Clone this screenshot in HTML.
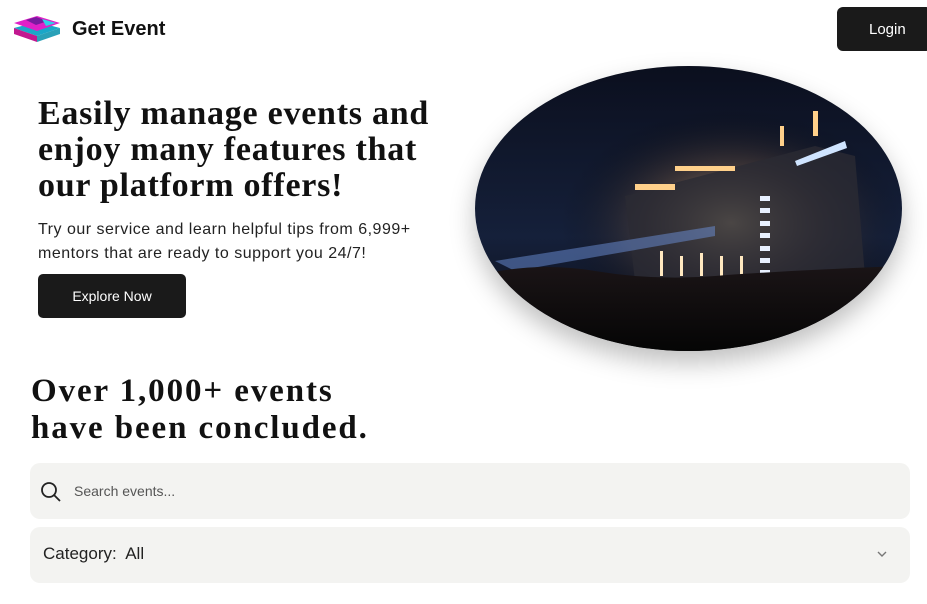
<!DOCTYPE html>
<html><head><meta charset="utf-8"><style>
*{margin:0;padding:0;box-sizing:border-box}
body{width:927px;height:604px;background:#fff;font-family:"Liberation Sans",sans-serif;color:#111;position:relative;overflow:hidden}
.logo{position:absolute;left:12px;top:14px}
.brand{position:absolute;left:72px;top:18px;font-size:20px;font-weight:bold;color:#111}
.login{position:absolute;left:837px;top:7px;width:95px;height:44px;background:#1a1a1a;color:#fff;border-radius:6px;font-size:15px;line-height:46px;padding-left:32px}
h1{position:absolute;left:38px;top:96px;font-family:"Liberation Serif",serif;font-weight:bold;font-size:34px;line-height:36px;letter-spacing:0.75px}
.sub{position:absolute;left:38px;top:218px;font-size:16px;line-height:24px;color:#222;letter-spacing:0.5px}
.explore{position:absolute;left:38px;top:274px;width:148px;height:44px;background:#1a1a1a;color:#fff;border-radius:5px;font-size:14px;line-height:44px;text-align:center}
h2{position:absolute;left:31px;top:373px;font-family:"Liberation Serif",serif;font-weight:bold;font-size:33px;line-height:37px;letter-spacing:1.9px}
.search{position:absolute;left:30px;top:463px;width:880px;height:56px;background:#f3f3f1;border-radius:10px}
.search span{position:absolute;left:44px;top:20px;font-size:14px;color:#555}
.cat{position:absolute;left:30px;top:527px;width:880px;height:56px;background:#f3f3f1;border-radius:10px}
.cat span{position:absolute;left:13px;top:17px;font-size:17px;color:#222}
.img{position:absolute;left:475px;top:66px;width:427px;height:285px;border-radius:50%;box-shadow:0 12px 25px rgba(0,0,0,.25);overflow:hidden}
</style></head><body>
<svg class="logo" width="50" height="30" viewBox="0 0 50 30">
<polygon points="2,14 25,8 48,14 25,22" fill="#1aa7c8"/>
<polygon points="2,14 25,22 25,28 2,20" fill="#c2188f"/>
<polygon points="25,22 48,14 48,20 25,28" fill="#2aa1b8"/>
<polygon points="2,9 25,2 48,9 25,17" fill="#e020c8"/>
<polygon points="14,6 24,3 36,7 24,11" fill="#7a1aa0"/>
<polygon points="30,5 44,9 34,12" fill="#30d0e8"/>
</svg>
<div class="brand">Get Event</div>
<div class="login">Login</div>
<h1>Easily manage events and<br>enjoy many features that<br>our platform offers!</h1>
<div class="sub">Try our service and learn helpful tips from 6,999+<br>mentors that are ready to support you 24/7!</div>
<div class="explore">Explore Now</div>
<div class="img"><svg width="427" height="285" viewBox="0 0 427 285">
<defs>
<linearGradient id="sky" x1="0" y1="0" x2="0" y2="1"><stop offset="0" stop-color="#0b0f1e"/><stop offset=".6" stop-color="#15203a"/><stop offset="1" stop-color="#0a0a10"/></linearGradient>
<radialGradient id="glow" cx=".6" cy=".55" r=".4"><stop offset="0" stop-color="#f6d9a0" stop-opacity=".8"/><stop offset=".5" stop-color="#7a5a40" stop-opacity=".4"/><stop offset="1" stop-color="#000" stop-opacity="0"/></radialGradient>
<linearGradient id="crowd" x1="0" y1="0" x2="0" y2="1"><stop offset="0" stop-color="#1a1416"/><stop offset="1" stop-color="#050505"/></linearGradient>
</defs>
<rect width="427" height="285" fill="url(#sky)"/>
<rect width="427" height="285" fill="url(#glow)"/>
<polygon points="150,130 340,80 380,90 390,210 160,215" fill="#2a2a33" opacity=".8"/>
<polygon points="20,195 240,160 240,170 40,205" fill="#6c8fd8" opacity=".5"/>
<polygon points="320,95 370,75 372,82 322,100" fill="#cfe4ff"/>
<g fill="#e8f0ff"><rect x="285" y="130" width="10" height="5"/><rect x="285" y="142" width="10" height="5"/><rect x="285" y="155" width="10" height="5"/><rect x="285" y="167" width="10" height="5"/><rect x="285" y="180" width="10" height="5"/><rect x="285" y="192" width="10" height="5"/><rect x="285" y="204" width="10" height="5"/></g>
<g fill="#ffd08a"><rect x="305" y="60" width="4" height="20"/><rect x="338" y="45" width="5" height="25"/><rect x="160" y="118" width="40" height="6"/><rect x="200" y="100" width="60" height="5"/></g>
<g fill="#ffe8c0"><rect x="185" y="185" width="3" height="25"/><rect x="205" y="190" width="3" height="20"/><rect x="225" y="187" width="3" height="23"/><rect x="245" y="190" width="3" height="20"/><rect x="265" y="190" width="3" height="20"/></g>
<path d="M0,210 Q60,195 120,205 T240,210 T427,200 L427,285 L0,285Z" fill="url(#crowd)"/>
</svg></div>
<h2>Over 1,000+ events<br>have been concluded.</h2>
<div class="search"><svg style="position:absolute;left:10px;top:18px" width="22" height="22" viewBox="0 0 22 22"><circle cx="9" cy="9" r="7" fill="none" stroke="#222" stroke-width="1.8"/><line x1="14" y1="14" x2="20" y2="20" stroke="#222" stroke-width="1.8"/></svg><span>Search events...</span></div>
<div class="cat"><span>Category:&nbsp; All</span><svg style="position:absolute;left:846px;top:23px" width="12" height="8" viewBox="0 0 12 8"><path d="M2 2 L6 6 L10 2" fill="none" stroke="#777" stroke-width="1.4"/></svg></div>
</body></html>
